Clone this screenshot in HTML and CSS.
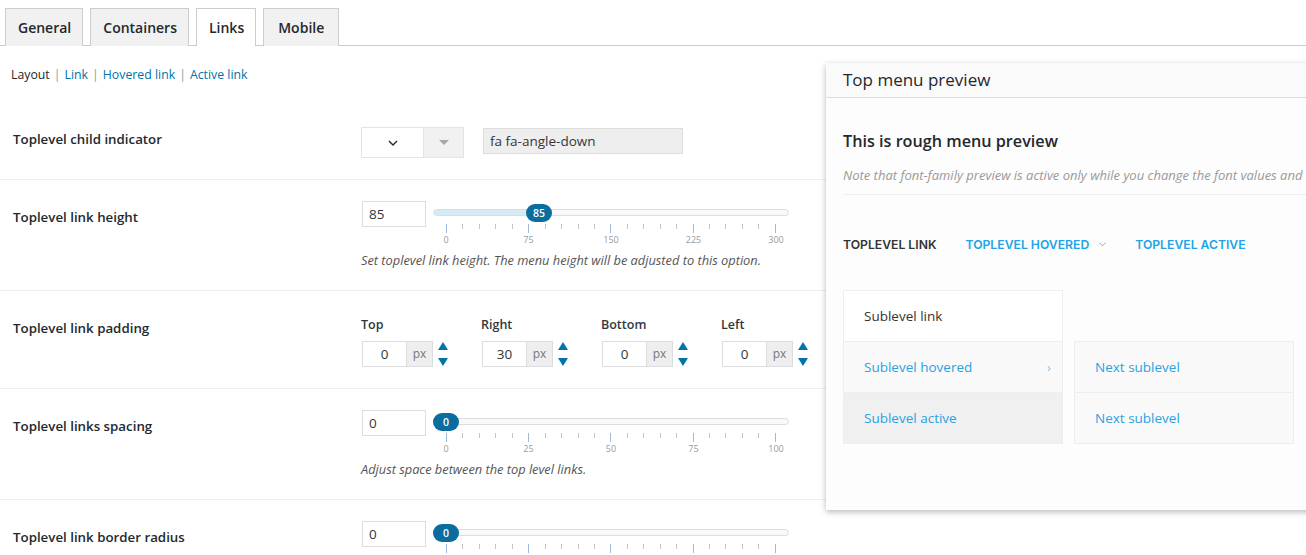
FILE: index.html
```html
<!DOCTYPE html>
<html lang="en">
<head>
<meta charset="utf-8">
<title>Menu settings - Links</title>
<link rel="stylesheet" href="styles.css">
</head>
<body>
<div class="page">
  <nav class="tabs">
    <a class="tab">General</a>
    <a class="tab">Containers</a>
    <a class="tab active">Links</a>
    <a class="tab tab-wide">Mobile</a>
  </nav>

  <div class="subnav">
    <span class="cur">Layout</span><span class="sep">|</span><a>Link</a><span class="sep">|</span><a>Hovered link</a><span class="sep">|</span><a>Active link</a>
  </div>

  <div class="settings">
    <div class="row row-first">
      <div class="label">Toplevel child indicator</div>
      <div class="ctl">
        <div class="icon-pick">
          <div class="icon-pick-main">
            <svg width="10" height="6" viewBox="0 0 10 6"><path d="M1 1 L5 5 L9 1" fill="none" stroke="#23282d" stroke-width="1.4"/></svg>
          </div>
          <div class="icon-pick-btn"><span class="tri"></span></div>
        </div>
        <div class="text-field">fa fa-angle-down</div>
      </div>
    </div>

    <div class="row">
      <div class="label">Toplevel link height</div>
      <div class="ctl col">
        <div class="range">
          <div class="num-field">85</div>
          <div class="slider">
            <div class="track"><div class="fill" style="width:106px"></div></div>
            <div class="knob" style="left:93px">85</div>
            <div class="ticks">
              <span class="mj"></span><span></span><span></span><span></span><span></span>
              <span class="mj"></span><span></span><span></span><span></span><span></span>
              <span class="mj"></span><span></span><span></span><span></span><span></span>
              <span class="mj"></span><span></span><span></span><span></span><span></span>
              <span class="mj"></span>
            </div>
            <div class="tick-labels"><span>0</span><span>75</span><span>150</span><span>225</span><span>300</span></div>
          </div>
        </div>
        <p class="desc">Set toplevel link height. The menu height will be adjusted to this option.</p>
      </div>
    </div>

    <div class="row">
      <div class="label">Toplevel link padding</div>
      <div class="ctl">
        <div class="pad-group">
          <div class="pad-label">Top</div>
          <div class="pad-inputs">
            <div class="unit-field"><span class="val">0</span><span class="unit">px</span></div>
            <div class="spin">
              <svg width="10" height="8" viewBox="0 0 10 8"><polygon points="5,0 10,8 0,8" fill="#0073aa"/></svg>
              <svg width="10" height="8" viewBox="0 0 10 8"><polygon points="0,0 10,0 5,8" fill="#0073aa"/></svg>
            </div>
          </div>
        </div>
        <div class="pad-group">
          <div class="pad-label">Right</div>
          <div class="pad-inputs">
            <div class="unit-field"><span class="val">30</span><span class="unit">px</span></div>
            <div class="spin">
              <svg width="10" height="8" viewBox="0 0 10 8"><polygon points="5,0 10,8 0,8" fill="#0073aa"/></svg>
              <svg width="10" height="8" viewBox="0 0 10 8"><polygon points="0,0 10,0 5,8" fill="#0073aa"/></svg>
            </div>
          </div>
        </div>
        <div class="pad-group">
          <div class="pad-label">Bottom</div>
          <div class="pad-inputs">
            <div class="unit-field"><span class="val">0</span><span class="unit">px</span></div>
            <div class="spin">
              <svg width="10" height="8" viewBox="0 0 10 8"><polygon points="5,0 10,8 0,8" fill="#0073aa"/></svg>
              <svg width="10" height="8" viewBox="0 0 10 8"><polygon points="0,0 10,0 5,8" fill="#0073aa"/></svg>
            </div>
          </div>
        </div>
        <div class="pad-group">
          <div class="pad-label">Left</div>
          <div class="pad-inputs">
            <div class="unit-field"><span class="val">0</span><span class="unit">px</span></div>
            <div class="spin">
              <svg width="10" height="8" viewBox="0 0 10 8"><polygon points="5,0 10,8 0,8" fill="#0073aa"/></svg>
              <svg width="10" height="8" viewBox="0 0 10 8"><polygon points="0,0 10,0 5,8" fill="#0073aa"/></svg>
            </div>
          </div>
        </div>
      </div>
    </div>

    <div class="row">
      <div class="label">Toplevel links spacing</div>
      <div class="ctl col">
        <div class="range">
          <div class="num-field">0</div>
          <div class="slider">
            <div class="track"><div class="fill" style="width:0px"></div></div>
            <div class="knob" style="left:0px">0</div>
            <div class="ticks">
              <span class="mj"></span><span></span><span></span><span></span><span></span>
              <span class="mj"></span><span></span><span></span><span></span><span></span>
              <span class="mj"></span><span></span><span></span><span></span><span></span>
              <span class="mj"></span><span></span><span></span><span></span><span></span>
              <span class="mj"></span>
            </div>
            <div class="tick-labels"><span>0</span><span>25</span><span>50</span><span>75</span><span>100</span></div>
          </div>
        </div>
        <p class="desc">Adjust space between the top level links.</p>
      </div>
    </div>

    <div class="row">
      <div class="label">Toplevel link border radius</div>
      <div class="ctl col">
        <div class="range">
          <div class="num-field">0</div>
          <div class="slider">
            <div class="track"><div class="fill" style="width:0px"></div></div>
            <div class="knob" style="left:0px">0</div>
            <div class="ticks">
              <span class="mj"></span><span></span><span></span><span></span><span></span>
              <span class="mj"></span><span></span><span></span><span></span><span></span>
              <span class="mj"></span><span></span><span></span><span></span><span></span>
              <span class="mj"></span><span></span><span></span><span></span><span></span>
              <span class="mj"></span>
            </div>
          </div>
        </div>
      </div>
    </div>
  </div>

  <aside class="preview">
    <div class="preview-head">Top menu preview</div>
    <div class="preview-body">
      <h2 class="preview-title">This is rough menu preview</h2>
      <p class="preview-note">Note that font-family preview is active only while you change the font values and is not saved until you save the settings.</p>
      <ul class="demo-menu">
        <li class="dm-link">Toplevel link</li>
        <li class="dm-hover">Toplevel hovered<svg class="dm-caret" width="7" height="5" viewBox="0 0 7 5"><path d="M0.5 0.8 L3.5 3.8 L6.5 0.8" fill="none" stroke="#8aa4bd" stroke-width="1"/></svg></li>
        <li class="dm-active">Toplevel active</li>
      </ul>
      <div class="subs">
        <ul class="sub">
          <li class="sub-link">Sublevel link</li>
          <li class="sub-hover">Sublevel hovered <span class="chev">›</span></li>
          <li class="sub-active">Sublevel active</li>
        </ul>
        <ul class="sub sub-next">
          <li>Next sublevel</li>
          <li>Next sublevel</li>
        </ul>
      </div>
    </div>
  </aside>
</div>
</body>
</html>
```

FILE: styles.css
```css
* { box-sizing: border-box; }

html, body {
  margin: 0;
  padding: 0;
  width: 1306px;
  height: 555px;
  overflow: hidden;
  background: #fff;
}

body {
  font-family: "Open Sans", "Noto Sans", sans-serif;
  color: #23282d;
}

.page {
  position: relative;
  width: 1306px;
  height: 555px;
  overflow: hidden;
}

/* Tabs */
.tabs {
  display: flex;
  gap: 7px;
  padding: 8px 0 0 5px;
  height: 46px;
  border-bottom: 1px solid #ccc;
}

.tab {
  display: block;
  height: 38px;
  padding: 0 11px 0 12px;
  border: 1px solid #ccc;
  border-bottom: none;
  background: #f1f1f1;
  font-size: 14px;
  font-weight: 600;
  line-height: 37px;
  color: #23282d;
}

.tab.tab-wide { padding: 0 14px 0 14px; }

.tab.active {
  background: #fff;
  position: relative;
  z-index: 1;
}

/* Sub navigation */
.subnav {
  margin: 20px 0 17px 11px;
  font-size: 12.3px;
  line-height: 18px;
}

.subnav a { color: #0073aa; }
.subnav .sep { color: #8a9aa8; margin: 0 4px; }

/* Setting rows */
.row {
  display: grid;
  grid-template-columns: 348px 1fr;
  padding: 21px 0 21px 13px;
  border-bottom: 1px solid #eee;
}

.label {
  padding-top: 6px;
  font-size: 13.3px;
  font-weight: 600;
  line-height: 20px;
  color: #23282d;
}

.row-first .label { padding-top: 7px; }

.ctl { display: flex; align-items: flex-start; }
.ctl.col { flex-direction: column; }

.row-first .ctl { margin-top: 5px; }

/* Icon picker */
.icon-pick {
  display: flex;
  height: 31px;
  border: 1px solid #e4e4e4;
  background: #fff;
}

.icon-pick-main {
  width: 61px;
  display: flex;
  align-items: center;
  justify-content: center;
}

.icon-pick-btn {
  width: 40px;
  background: #f1f1f1;
  border-left: 1px solid #e4e4e4;
  display: flex;
  align-items: center;
  justify-content: center;
}

.tri {
  width: 0;
  height: 0;
  border-left: 5px solid transparent;
  border-right: 5px solid transparent;
  border-top: 5px solid #a8a8a8;
}

.text-field {
  margin: 1px 0 0 19px;
  width: 200px;
  height: 26px;
  padding: 0 6px;
  border: 1px solid #ddd;
  background: #eee;
  font-size: 13.5px;
  line-height: 24px;
  color: #32373c;
}

/* Range slider */
.range {
  display: flex;
  align-items: flex-start;
  gap: 7px;
}

.num-field {
  width: 64px;
  height: 26px;
  padding: 0 6px;
  border: 1px solid #ddd;
  background: #fff;
  font-size: 13.5px;
  line-height: 24px;
  color: #32373c;
  margin-left: 1px;
}

.slider {
  position: relative;
  width: 356px;
  padding-top: 8px;
}

.track {
  height: 7px;
  border: 1px solid #ddd;
  border-radius: 4px;
  background: #f9f9f9;
  overflow: hidden;
}

.fill {
  height: 100%;
  background: #d5ebf3;
}

.knob {
  position: absolute;
  top: 3px;
  width: 26px;
  height: 18px;
  border-radius: 9px;
  background: #0b6c9f;
  color: #fff;
  font-size: 10.5px;
  font-weight: 600;
  line-height: 18px;
  text-align: center;
}

.ticks {
  display: flex;
  justify-content: space-between;
  align-items: flex-start;
  width: 330px;
  height: 9px;
  margin: 8px 0 0 13px;
}

.ticks span {
  width: 1px;
  height: 5px;
  background: #c4c4c4;
}

.ticks span.mj {
  height: 9px;
  background: #9fb9dc;
}

.tick-labels {
  display: flex;
  justify-content: space-between;
  width: 360px;
  margin: 1px 0 0 -2px;
  font-size: 9px;
  line-height: 11px;
  color: #9a9a9a;
}

.tick-labels span {
  width: 30px;
  text-align: center;
}

.desc {
  margin: 6px 0 0;
  font-size: 12.8px;
  font-style: italic;
  line-height: 18px;
  color: #555;
}

/* Padding inputs */
.pad-group { width: 120px; }

.pad-label {
  padding-top: 4px;
  margin-bottom: 7px;
  font-size: 12.5px;
  font-weight: 600;
  line-height: 18px;
  color: #32373c;
}

.pad-inputs {
  display: flex;
  align-items: center;
  gap: 5px;
}

.unit-field {
  display: flex;
  width: 71px;
  height: 26px;
  border: 1px solid #ddd;
  margin-left: 1px;
  font-size: 13.5px;
  line-height: 24px;
}

.unit-field .val {
  flex: 1;
  text-align: center;
  color: #32373c;
  background: #fff;
}

.unit-field .unit {
  width: 26px;
  text-align: center;
  background: #eee;
  border-left: 1px solid #ddd;
  color: #777;
  font-size: 12px;
}

.spin {
  display: flex;
  flex-direction: column;
  gap: 8px;
}

.spin svg { display: block; }

/* Preview panel */
.preview {
  position: absolute;
  left: 826px;
  top: 63px;
  width: 520px;
  height: 447px;
  background: #fdfdfd;
  box-shadow: 0 2px 6px rgba(0, 0, 0, 0.28);
  z-index: 2;
  overflow: hidden;
}

.preview-head {
  height: 35px;
  padding: 0 17px;
  background: #fafafa;
  border-bottom: 1px solid #ddd;
  font-size: 17px;
  line-height: 34px;
  color: #23282d;
}

.preview-body { padding: 0 17px; }

.preview-title {
  margin: 31px 0 0;
  font-size: 16.2px;
  font-weight: 600;
  line-height: 24px;
  color: #23282d;
}

.preview-note {
  margin: 13px 0 0;
  padding-bottom: 10px;
  border-bottom: 1px solid #eee;
  white-space: nowrap;
  font-size: 13px;
  font-style: italic;
  line-height: 18px;
  color: #999;
}

.demo-menu {
  list-style: none;
  margin: 42px 0 0;
  padding: 0;
  display: flex;
  gap: 29px;
  font-family: "Inter", "Noto Sans", sans-serif;
  font-size: 12.2px;
  font-weight: 600;
  text-transform: uppercase;
  line-height: 16px;
}

.dm-link { color: #333; }
.dm-hover, .dm-active { color: #22a3e6; }

.dm-caret { margin-left: 10px; vertical-align: 2px; }

.subs {
  display: flex;
  align-items: flex-start;
  gap: 11px;
  margin-top: 37px;
}

.sub {
  list-style: none;
  margin: 0;
  padding: 0;
  width: 220px;
  border: 1px solid #eee;
  font-size: 13.5px;
}

.sub li {
  height: 51px;
  padding: 0 11px 0 20px;
  display: flex;
  align-items: center;
  justify-content: space-between;
  border-top: 1px solid #eee;
  color: #27a3e3;
}

.sub li:first-child { border-top: none; height: 50px; }

.sub-link { background: #fff; color: #333 !important; }
.sub-hover { background: #f9f9f9; }
.sub-active { background: #f0f0f0; }

.chev { color: #8fbbe0; font-size: 13px; }

.sub-next { margin-top: 51px; }
.sub-next li { background: #f9f9f9; }
```
